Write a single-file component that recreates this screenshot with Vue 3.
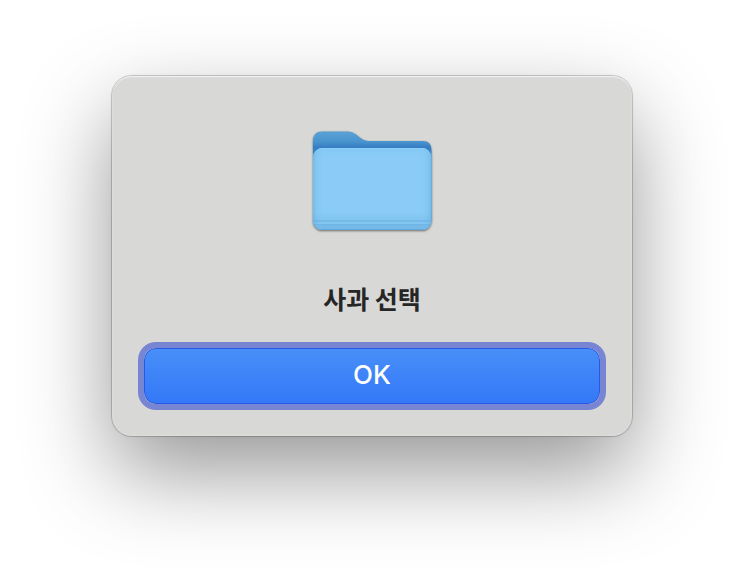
<script setup>
import { ref } from 'vue'

const open = ref(true)
</script>

<template>
  <main class="page">
    <section v-if="open" class="dialog" role="alertdialog" aria-labelledby="dialog-title">
      <svg class="folder" viewBox="0 0 128 128" aria-hidden="true">
        <defs>
          <linearGradient id="folder-back" x1="0" y1="15" x2="0" y2="36" gradientUnits="userSpaceOnUse">
            <stop offset="0" stop-color="#5ba2d6" />
            <stop offset="0.5" stop-color="#4a94ce" />
            <stop offset="0.8" stop-color="#357cc5" />
            <stop offset="1" stop-color="#3583c6" />
          </linearGradient>
          <linearGradient id="folder-side" x1="5" y1="0" x2="123.4" y2="0" gradientUnits="userSpaceOnUse">
            <stop offset="0" stop-color="#5ba9dc" stop-opacity="0.5" />
            <stop offset="0.03" stop-color="#6bb5e6" stop-opacity="0.25" />
            <stop offset="0.1" stop-color="#8accf7" stop-opacity="0" />
            <stop offset="0.9" stop-color="#8accf7" stop-opacity="0" />
            <stop offset="0.97" stop-color="#6bb5e6" stop-opacity="0.25" />
            <stop offset="1" stop-color="#5ba9dc" stop-opacity="0.5" />
          </linearGradient>
          <linearGradient id="folder-front" x1="0" y1="32" x2="0" y2="114" gradientUnits="userSpaceOnUse">
            <stop offset="0" stop-color="#83c9f5" />
            <stop offset="0.12" stop-color="#8accf7" />
            <stop offset="0.78" stop-color="#8accf7" />
            <stop offset="0.86" stop-color="#82c5f1" />
            <stop offset="1" stop-color="#7bbfec" />
          </linearGradient>
          <clipPath id="folder-clip">
            <rect x="5" y="32" width="118.4" height="82" rx="9" />
          </clipPath>
        </defs>
        <path
          d="M5 42V25Q5 15.500 14 15.500H38C44 15.500 46 17 49.500 19.500C54 23.500 57 25 62 25H115Q123.400 25 123.400 34V42V104H5Z"
          fill="url(#folder-back)"
        />
        <g clip-path="url(#folder-clip)">
          <rect x="5" y="32" width="119" height="82" fill="url(#folder-front)" />
          <rect x="5" y="104" width="119" height="2" fill="#74b9e7" />
          <rect x="5" y="106" width="119" height="2" fill="#82c5f1" />
          <rect x="5" y="108" width="119" height="1" fill="#70b5e4" />
          <rect x="5" y="109" width="119" height="5" fill="#74b9e8" />
          <rect x="5" y="32" width="119" height="82" fill="url(#folder-side)" />
          <path d="M8 32.5H121" stroke="#8fcff7" />
          <path d="M8 113.6H121" stroke="#5ca6da" />
        </g>
      </svg>
      <h1 id="dialog-title" class="title">사과 선택</h1>
      <button class="confirm" type="button" autofocus @click="open = false">OK</button>
    </section>
  </main>
</template>

<style>
body {
  background: #ffffff;
}
</style>

<style scoped>
.page {
  display: flex;
  justify-content: center;
  align-items: flex-start;
  box-sizing: border-box;
  min-height: 100vh;
  padding: 76px 32px;
  overflow: hidden;
}

.dialog {
  display: flex;
  flex-direction: column;
  align-items: center;
  box-sizing: border-box;
  width: 100%;
  max-width: 520px;
  padding: 40px 32px 32px;
  border-radius: 20px;
  background: #d8d8d6;
  box-shadow:
    inset 0 2px 1px -1px #f2f2f2,
    inset 0 0 1px 1px rgba(235, 235, 235, 0.3),
    0 0 0 1px rgba(0, 0, 0, 0.16),
    0 0 3px rgba(0, 0, 0, 0.1),
    0 36px 88px rgba(0, 0, 0, 0.41);
}

.folder {
  width: 128px;
  height: 128px;
  filter: drop-shadow(0 1px 1px rgba(0, 0, 0, 0.5));
}

.title {
  margin: 38px 0 34px;
  color: #262626;
  font-family: "Noto Sans CJK KR", sans-serif;
  font-size: 25px;
  font-weight: 700;
  line-height: 32px;
}

.confirm {
  width: 100%;
  height: 56px;
  padding: 0 16px 2px;
  border: 1px solid #2859e6;
  border-radius: 12px;
  outline: none;
  background: linear-gradient(#488ff8, #3478f7);
  box-shadow: 0 0 0 6px #7885d3;
  color: #ffffff;
  font-family: Inter, "Liberation Sans", sans-serif;
  font-size: 26px;
  font-weight: 500;
  line-height: 32px;
}
</style>
